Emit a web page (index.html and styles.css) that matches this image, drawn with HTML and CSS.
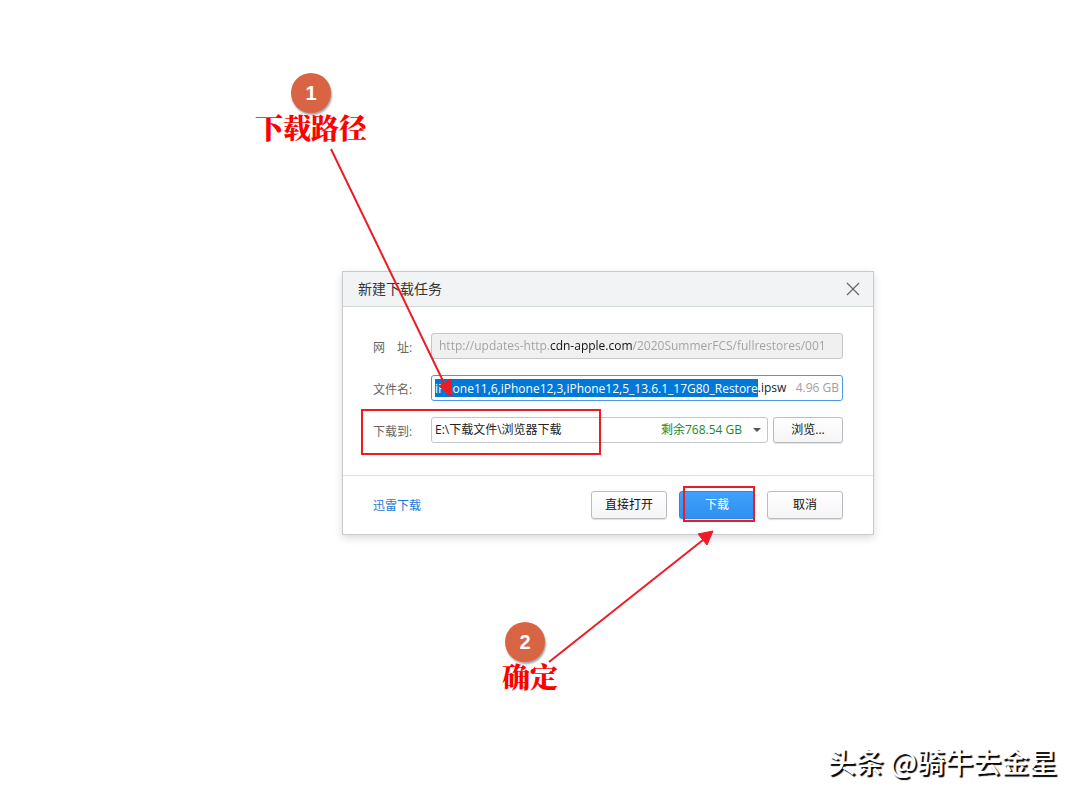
FILE: index.html
```html
<!DOCTYPE html>
<html lang="zh-CN">
<head>
<meta charset="utf-8">
<meta name="viewport" content="width=device-width, initial-scale=1">
<title>新建下载任务</title>
<link rel="stylesheet" href="styles.css">
</head>
<body>
<main class="stage">
  <form class="dialog">
    <header class="dialog-header">
      <h1 class="dialog-title">新建下载任务</h1>
      <button class="close" type="button" aria-label="关闭">
        <svg width="14" height="14" viewBox="0 0 14 14"><path d="M1 1L13 13M13 1L1 13" fill="none" stroke="#666" stroke-width="1.2"/></svg>
      </button>
    </header>
    <div class="fields">
      <label class="label" for="url">网　址:</label>
      <div class="box box-url">
        <input class="url" id="url" readonly value="http://updates-http.cdn-apple.com/2020SummerFCS/fullrestores/001">
      </div>
      <label class="label" for="name">文件名:</label>
      <div class="box box-name">
        <input class="name" id="name" value="iPhone11,6,iPhone12,3,iPhone12,5_13.6.1_17G80_Restore"><span class="ext">.ipsw</span>
        <span class="size">4.96 GB</span>
      </div>
      <label class="label" for="folder">下载到:</label>
      <div class="folder-row">
        <div class="box box-folder">
          <select class="folder" id="folder"><option>E:\下载文件\浏览器下载</option></select>
          <span class="free">剩余768.54 GB</span>
          <svg class="caret" width="8" height="4" viewBox="0 0 8 4"><path d="M0 0H8L4 4Z" fill="#555"/></svg>
        </div>
        <button class="button browse" type="button">浏览...</button>
      </div>
    </div>
    <footer class="dialog-footer">
      <a class="link" href="#">迅雷下载</a>
      <button class="button" type="button">直接打开</button>
      <button class="button primary" type="submit">下载</button>
      <button class="button" type="button">取消</button>
    </footer>
    <div class="frame frame-folder"></div>
    <div class="frame frame-download"></div>
    <div class="note note-path"><span class="badge">1</span><span class="note-text">下载路径</span></div>
    <div class="note note-confirm"><span class="badge">2</span><span class="note-text">确定</span></div>
    <svg class="arrow arrow-path" width="124" height="252" viewBox="0 0 124 252"><path d="M2 2L115 236" fill="none" stroke="#ed1c24" stroke-width="2"/><path d="M123 250L110 239L122 232Z" fill="#ed1c24" stroke="#ed1c24"/></svg>
    <svg class="arrow arrow-confirm" width="168" height="134" viewBox="0 0 168 134"><path d="M2 132L156 10" fill="none" stroke="#ed1c24" stroke-width="2"/><path d="M166 1L151 4L160 15Z" fill="#ed1c24" stroke="#ed1c24"/></svg>
  </form>
  <p class="watermark">头条 @骑牛去金星</p>
</main>
</body>
</html>
```
FILE: styles.css
```css
* { box-sizing: border-box; }

body {
  margin: 0;
  background: #fff;
  color: #222;
  font: 12px/16px "Open Sans", "Noto Sans CJK SC", sans-serif;
}

input, select, button {
  margin: 0;
  padding: 0;
  border: 0;
  background: none;
  color: inherit;
  font: inherit;
  outline: 0;
}

.stage {
  position: relative;
  min-height: 100vh;
  padding: 271px 206px 0 342px;
}

.dialog {
  position: relative;
  max-width: 532px;
  background: #fff;
  border: 1px solid #c8cacc;
  box-shadow: 0 3px 8px rgba(0, 0, 0, .14);
}

.dialog-header {
  display: flex;
  align-items: center;
  justify-content: space-between;
  height: 35px;
  padding: 0 13px 0 15px;
  background: #f2f3f5;
  border-bottom: 1px solid #d0d5d8;
}

.dialog-title {
  margin: 0;
  font-size: 14px;
  font-weight: 400;
  line-height: 20px;
  color: #333;
}

.close { display: flex; }

.fields {
  display: grid;
  grid-template-columns: 58px 1fr;
  align-items: center;
  row-gap: 16px;
  padding: 26px 30px 32px;
}

.label { padding-top: 4px; color: #666; }

.box {
  display: flex;
  align-items: center;
  height: 26px;
  border: 1px solid #c3c7cb;
  border-radius: 3px;
  overflow: hidden;
}

.box-url { padding: 0 6px 0 7px; background: #f0f0f0; }

.url {
  width: 100%;
  color: transparent;
  background: linear-gradient(90deg, #a0a0a0 111px, #111 111px, #111 193px, #a0a0a0 193px);
  -webkit-background-clip: text;
  background-clip: text;
}

.box-name { padding: 0 3px; border-color: #4a98e8; white-space: nowrap; }

.name {
  flex: 0 0 auto;
  field-sizing: content;
  height: 18px;
  background: #0078d7;
  color: #fff;
}

.size { margin-left: auto; color: #a0a0a0; }

.folder-row { display: flex; gap: 5px; }

.box-folder { position: relative; flex: 1; }

.folder {
  width: 100%;
  height: 24px;
  padding-left: 3px;
  appearance: none;
}

.free {
  position: absolute;
  right: 25px;
  color: #1c8a1c;
  pointer-events: none;
}

.caret { position: absolute; right: 6px; pointer-events: none; }

.button {
  width: 76px;
  height: 28px;
  border: 1px solid #b9bdc3;
  border-radius: 3px;
  background: linear-gradient(#fff, #f5f5f6);
  box-shadow: 0 1px 1px rgba(0, 0, 0, .12);
  color: #111;
}

.browse { width: 70px; height: 26px; }

.dialog-footer {
  display: flex;
  align-items: center;
  gap: 12px;
  height: 59px;
  padding: 0 30px;
  border-top: 1px solid #dcdedf;
}

.link { margin-right: auto; padding-top: 2px; color: #1a78d6; text-decoration: none; }

.primary {
  border-color: #2b86e4;
  background: linear-gradient(#40a0fb, #3090f2);
  color: #fff;
}

.frame { position: absolute; border: 2px solid #ed1c24; pointer-events: none; }
.frame-folder { left: 18px; top: 137px; width: 240px; height: 46px; }
.frame-download { left: 340px; top: 214px; width: 72px; height: 36px; }

.note {
  position: absolute;
  display: flex;
  flex-direction: column;
  align-items: center;
}

.note-path { left: -88px; top: -199px; }
.note-confirm { left: 159px; top: 350px; align-items: flex-start; }
.note-confirm .badge { margin-left: 3px; }

.badge {
  width: 40px;
  height: 40px;
  border-radius: 50%;
  background: #d96444;
  box-shadow: 1px 2px 2px rgba(0, 0, 0, .35);
  color: #fff;
  font: bold 20px/40px "Liberation Sans", sans-serif;
  text-align: center;
}

.note-text {
  color: #f00;
  font: 900 28px/28px "Noto Serif CJK SC", "Noto Sans CJK SC", serif;
  white-space: nowrap;
}

.arrow { position: absolute; pointer-events: none; }
.arrow-path { left: -14px; top: -125px; }
.arrow-confirm { left: 204px; top: 258px; }

.watermark {
  position: absolute;
  right: 23px;
  bottom: 19px;
  margin: 0;
  color: #fff;
  font: 500 28px/40px "Noto Sans CJK SC", sans-serif;
  text-shadow: 2px 2px 1px #000;
}
```
